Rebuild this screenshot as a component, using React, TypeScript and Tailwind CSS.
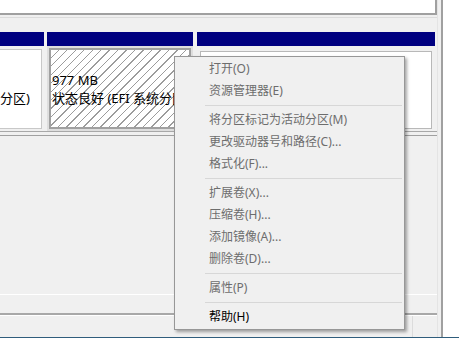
const menuGroups: { label: string; enabled?: boolean }[][] = [
  [{ label: "打开(O)" }, { label: "资源管理器(E)" }],
  [{ label: "将分区标记为活动分区(M)" }, { label: "更改驱动器号和路径(C)..." }, { label: "格式化(F)..." }],
  [{ label: "扩展卷(X)..." }, { label: "压缩卷(H)..." }, { label: "添加镜像(A)..." }, { label: "删除卷(D)..." }],
  [{ label: "属性(P)" }],
  [{ label: "帮助(H)", enabled: true }],
];

const ContextMenu = () => (
  <div className="absolute left-[174px] top-[56px] w-[231px] border border-[#979797] bg-[#f0f0f0] py-[1px] shadow-[2px_2px_3px_rgba(0,0,0,0.35)]">
    {menuGroups.map((group, gi) => (
      <div key={gi}>
        {gi > 0 && <div className="my-[3px] ml-[30px] mr-[2px] h-px bg-[#d7d7d7]" />}
        {group.map((item) => (
          <div
            key={item.label}
            className={`flex h-[22px] items-center pl-[34px] text-[12px] leading-none ${
              item.enabled ? "text-black" : "text-[#6d6d6d]"
            }`}
          >
            {item.label}
          </div>
        ))}
      </div>
    ))}
  </div>
);

export default function App() {
  return (
    <div className="relative flex h-[338px] w-[459px] overflow-hidden bg-white font-['Noto_Sans','Noto_Sans_CJK_SC',sans-serif] text-black">
      <div className="flex w-[443px] flex-col border-r-2 border-[#a0a0a0] bg-[#f0f0f0]">
        <div className="flex w-[438px] flex-1 flex-col border-r border-[#e4e4e4]">
          {/* top list pane */}
          <div className="h-[15px] w-[437px] border-r-2 border-b-2 border-[#a0a0a0] bg-white" />
          <div className="h-[3px] border-b border-[#dcdcdc]" />
          <div className="h-[14px]" />

          {/* disk row */}
          <div className="flex h-[100px] gap-[3px] border-b border-[#a8a8a8]">
            <div className="flex w-[44px] flex-col">
              <div className="h-[14px] bg-[#000080]" />
              <div className="flex flex-1 pt-[3px] pb-[2px] pr-[2px]">
                <div className="flex flex-1 flex-col justify-center border-r border-b border-t border-[#c8c8c8] bg-white text-[13px] leading-[18px]">
                  <div>&nbsp;</div>
                  <div className="whitespace-nowrap">分区)</div>
                </div>
              </div>
            </div>
            <div className="flex w-[146px] flex-col">
              <div className="h-[14px] bg-[#000080]" />
              <div className="flex flex-1 bg-[#dedede] p-[2px]">
                <div className="flex flex-1 items-center overflow-hidden border-2 border-[#a0a0a0] bg-[repeating-linear-gradient(135deg,#ffffff_0px,#ffffff_5px,#9c9c9c_5px,#9c9c9c_6px)] pl-[1px] text-[13px] leading-[18px]">
                  <div className="whitespace-nowrap">
                    <div>977 MB</div>
                    <div>状态良好 (EFI 系统分区</div>
                  </div>
                </div>
              </div>
            </div>
            <div className="ml-[1px] flex w-[238px] flex-col">
              <div className="h-[14px] bg-[#000080]" />
              <div className="flex flex-1 px-[3px] pt-[5px] pb-[2px]">
                <div className="flex-1 border border-[#b8b8b8] bg-white" />
              </div>
            </div>
          </div>
          <div className="h-[4px] border-b border-[#a0a0a0]" />

          <div className="flex-1" />
          <div className="h-px bg-white" />
          <div className="h-[18px]" />
          <div className="h-[2px] bg-[#a8a8a8]" />
          <div className="flex h-[23px] border-t border-white">
            <div className="w-[412px]" />
            <div className="flex-1 border-l border-[#dcdcdc]" />
          </div>
        </div>
      </div>
      <div className="flex-1 bg-white" />
      <div className="absolute bottom-0 left-0 h-px w-full bg-[#2f5d7c]" />
      <ContextMenu />
    </div>
  );
}
